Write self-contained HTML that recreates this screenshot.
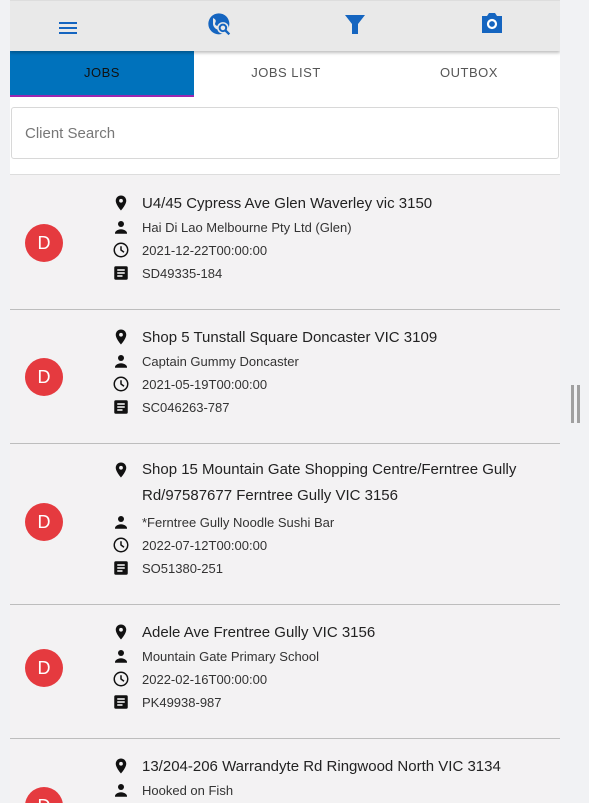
<!DOCTYPE html>
<html><head><style>
*{margin:0;padding:0;box-sizing:border-box}
html,body{width:589px;height:803px;overflow:hidden}
body{background:#f1f2f4;font-family:"Liberation Sans",Arial,sans-serif;position:relative}
.wrap{position:absolute;left:10px;top:0;width:550px;height:803px;background:#fff;overflow:hidden}
.bar{position:absolute;left:0;top:0;width:550px;height:51px;background:#e9e9e9;box-shadow:0 2px 3px rgba(0,0,0,.25);z-index:2;border-top:1px solid #ddd}
.ic{position:absolute}
.tabs{position:absolute;top:51px;left:0;width:550px;height:46px;background:#fff}
.tab{position:absolute;top:0;height:46px;line-height:44px;text-align:center;font-size:13px;color:#555;letter-spacing:.5px}
.search{position:absolute;left:1px;top:107px;width:548px;height:52px;border:1px solid #d8d8d8;border-radius:3px;font-size:15px;color:#777;padding:17px 13px}
.card{position:absolute;left:0;width:550px;background:#f3f2f3;border-bottom:1px solid #bdbdbd}
.av{position:absolute;left:15px;width:38px;height:38px;border-radius:50%;background:#e53a3f;color:#fff;font-size:18px;text-align:center;line-height:38px}
.row{position:absolute;left:132px;font-size:13px;color:#333;white-space:nowrap}
.row.a{font-size:15px;color:#222}
.ri{position:absolute;left:102px}
</style></head><body>
<div class="wrap">
<div class="bar">
<svg class="ic" style="left:46px;top:15px" width="24" height="24" viewBox="0 0 24 24"><path d="M3 6h18v2H3zM3 11h18v2H3zM3 16h18v2H3z" fill="#1565c0"/></svg>
<svg class="ic" style="left:196px;top:10px" width="28" height="28" viewBox="0 0 24 24"><circle cx="11" cy="11" r="9" fill="#1565c0"/><path d="M6 6c2 1 3 2 2 4s1 3 3 3v3c-3 0-5-3-5-5z" fill="#e9e9e9"/><circle cx="14.5" cy="14.5" r="5" fill="#e9e9e9"/><circle cx="14.5" cy="14.5" r="2.8" fill="none" stroke="#1565c0" stroke-width="1.7"/><path d="M16.5 16.5l3.5 3.5" stroke="#1565c0" stroke-width="2"/></svg>
<svg class="ic" style="left:334px;top:12px" width="22" height="24" viewBox="0 0 22 24"><path d="M1 2h20l-7 9v10h-6V11z" fill="#1565c0"/></svg>
<svg class="ic" style="left:470px;top:11px" width="24" height="22" viewBox="0 0 24 22"><path d="M2 4h5l2-3h6l2 3h5v17H2z" fill="#1565c0"/><circle cx="12" cy="12" r="4" fill="none" stroke="#fff" stroke-width="2.2"/></svg>
</div>
<div class="tabs">
<div class="tab" style="left:0;width:184px;background:#0072bc;color:#111;border-bottom:2px solid #9c27b0">JOBS</div>
<div class="tab" style="left:184px;width:184px">JOBS LIST</div>
<div class="tab" style="left:368px;width:182px">OUTBOX</div>
</div>
<div class="search">Client Search</div>
<div style="position:absolute;left:0;top:174px;width:550px;height:1px;background:#ddd"></div>

<div class="card" style="top:175px;height:135px">
<div class="av" style="top:49px">D</div>
<svg class="ri" style="top:18px" width="18" height="20" viewBox="0 0 24 24"><path d="M12 2C8.1 2 5 5.1 5 9c0 5.2 7 13 7 13s7-7.8 7-13c0-3.9-3.1-7-7-7zm0 9.5a2.5 2.5 0 1 1 0-5 2.5 2.5 0 0 1 0 5z" fill="#111"/></svg>
<div class="row a" style="top:20px">U4/45 Cypress Ave Glen Waverley vic 3150</div>
<svg class="ri" style="top:43px" width="18" height="18" viewBox="0 0 24 24"><circle cx="12" cy="8" r="4" fill="#111"/><path d="M4 20c0-3 5-5 8-5s8 2 8 5v1H4z" fill="#111"/></svg>
<div class="row" style="top:45px">Hai Di Lao Melbourne Pty Ltd (Glen)</div>
<svg class="ri" style="top:66px" width="18" height="18" viewBox="0 0 24 24"><circle cx="12" cy="12" r="9" fill="none" stroke="#111" stroke-width="2"/><path d="M12 7v5l4 3" fill="none" stroke="#111" stroke-width="2"/></svg>
<div class="row" style="top:68px">2021-12-22T00:00:00</div>
<svg class="ri" style="top:89px" width="18" height="18" viewBox="0 0 24 24"><rect x="3" y="3" width="18" height="18" rx="2" fill="#111"/><path d="M7 8h10M7 12h10M7 16h7" stroke="#fff" stroke-width="2"/></svg>
<div class="row" style="top:91px">SD49335-184</div>
</div>

<div class="card" style="top:310px;height:134px">
<div class="av" style="top:48px">D</div>
<svg class="ri" style="top:17px" width="18" height="20" viewBox="0 0 24 24"><path d="M12 2C8.1 2 5 5.1 5 9c0 5.2 7 13 7 13s7-7.8 7-13c0-3.9-3.1-7-7-7zm0 9.5a2.5 2.5 0 1 1 0-5 2.5 2.5 0 0 1 0 5z" fill="#111"/></svg>
<div class="row a" style="top:19px">Shop 5 Tunstall Square Doncaster VIC 3109</div>
<svg class="ri" style="top:42px" width="18" height="18" viewBox="0 0 24 24"><circle cx="12" cy="8" r="4" fill="#111"/><path d="M4 20c0-3 5-5 8-5s8 2 8 5v1H4z" fill="#111"/></svg>
<div class="row" style="top:44px">Captain Gummy Doncaster</div>
<svg class="ri" style="top:65px" width="18" height="18" viewBox="0 0 24 24"><circle cx="12" cy="12" r="9" fill="none" stroke="#111" stroke-width="2"/><path d="M12 7v5l4 3" fill="none" stroke="#111" stroke-width="2"/></svg>
<div class="row" style="top:67px">2021-05-19T00:00:00</div>
<svg class="ri" style="top:88px" width="18" height="18" viewBox="0 0 24 24"><rect x="3" y="3" width="18" height="18" rx="2" fill="#111"/><path d="M7 8h10M7 12h10M7 16h7" stroke="#fff" stroke-width="2"/></svg>
<div class="row" style="top:90px">SC046263-787</div>
</div>

<div class="card" style="top:444px;height:161px">
<div class="av" style="top:59px">D</div>
<svg class="ri" style="top:16px" width="18" height="20" viewBox="0 0 24 24"><path d="M12 2C8.1 2 5 5.1 5 9c0 5.2 7 13 7 13s7-7.8 7-13c0-3.9-3.1-7-7-7zm0 9.5a2.5 2.5 0 1 1 0-5 2.5 2.5 0 0 1 0 5z" fill="#111"/></svg>
<div class="row a" style="top:18px;line-height:26px;margin-top:-5px">Shop 15 Mountain Gate Shopping Centre/Ferntree Gully<br>Rd/97587677 Ferntree Gully VIC 3156</div>
<svg class="ri" style="top:69px" width="18" height="18" viewBox="0 0 24 24"><circle cx="12" cy="8" r="4" fill="#111"/><path d="M4 20c0-3 5-5 8-5s8 2 8 5v1H4z" fill="#111"/></svg>
<div class="row" style="top:71px">*Ferntree Gully Noodle Sushi Bar</div>
<svg class="ri" style="top:92px" width="18" height="18" viewBox="0 0 24 24"><circle cx="12" cy="12" r="9" fill="none" stroke="#111" stroke-width="2"/><path d="M12 7v5l4 3" fill="none" stroke="#111" stroke-width="2"/></svg>
<div class="row" style="top:94px">2022-07-12T00:00:00</div>
<svg class="ri" style="top:115px" width="18" height="18" viewBox="0 0 24 24"><rect x="3" y="3" width="18" height="18" rx="2" fill="#111"/><path d="M7 8h10M7 12h10M7 16h7" stroke="#fff" stroke-width="2"/></svg>
<div class="row" style="top:117px">SO51380-251</div>
</div>

<div class="card" style="top:605px;height:134px">
<div class="av" style="top:44px">D</div>
<svg class="ri" style="top:17px" width="18" height="20" viewBox="0 0 24 24"><path d="M12 2C8.1 2 5 5.1 5 9c0 5.2 7 13 7 13s7-7.8 7-13c0-3.9-3.1-7-7-7zm0 9.5a2.5 2.5 0 1 1 0-5 2.5 2.5 0 0 1 0 5z" fill="#111"/></svg>
<div class="row a" style="top:19px">Adele Ave Frentree Gully VIC 3156</div>
<svg class="ri" style="top:42px" width="18" height="18" viewBox="0 0 24 24"><circle cx="12" cy="8" r="4" fill="#111"/><path d="M4 20c0-3 5-5 8-5s8 2 8 5v1H4z" fill="#111"/></svg>
<div class="row" style="top:44px">Mountain Gate Primary School</div>
<svg class="ri" style="top:65px" width="18" height="18" viewBox="0 0 24 24"><circle cx="12" cy="12" r="9" fill="none" stroke="#111" stroke-width="2"/><path d="M12 7v5l4 3" fill="none" stroke="#111" stroke-width="2"/></svg>
<div class="row" style="top:67px">2022-02-16T00:00:00</div>
<svg class="ri" style="top:88px" width="18" height="18" viewBox="0 0 24 24"><rect x="3" y="3" width="18" height="18" rx="2" fill="#111"/><path d="M7 8h10M7 12h10M7 16h7" stroke="#fff" stroke-width="2"/></svg>
<div class="row" style="top:90px">PK49938-987</div>
</div>

<div class="card" style="top:739px;height:64px;border-bottom:none">
<div class="av" style="top:48px">D</div>
<svg class="ri" style="top:17px" width="18" height="20" viewBox="0 0 24 24"><path d="M12 2C8.1 2 5 5.1 5 9c0 5.2 7 13 7 13s7-7.8 7-13c0-3.9-3.1-7-7-7zm0 9.5a2.5 2.5 0 1 1 0-5 2.5 2.5 0 0 1 0 5z" fill="#111"/></svg>
<div class="row a" style="top:19px">13/204-206 Warrandyte Rd Ringwood North VIC 3134</div>
<svg class="ri" style="top:42px" width="18" height="18" viewBox="0 0 24 24"><circle cx="12" cy="8" r="4" fill="#111"/><path d="M4 20c0-3 5-5 8-5s8 2 8 5v1H4z" fill="#111"/></svg>
<div class="row" style="top:44px">Hooked on Fish</div>
</div>
</div>
<div style="position:absolute;left:571px;top:385px;width:3px;height:38px;background:#a0a0a0"></div>
<div style="position:absolute;left:577px;top:385px;width:3px;height:38px;background:#a0a0a0"></div>
</body></html>
